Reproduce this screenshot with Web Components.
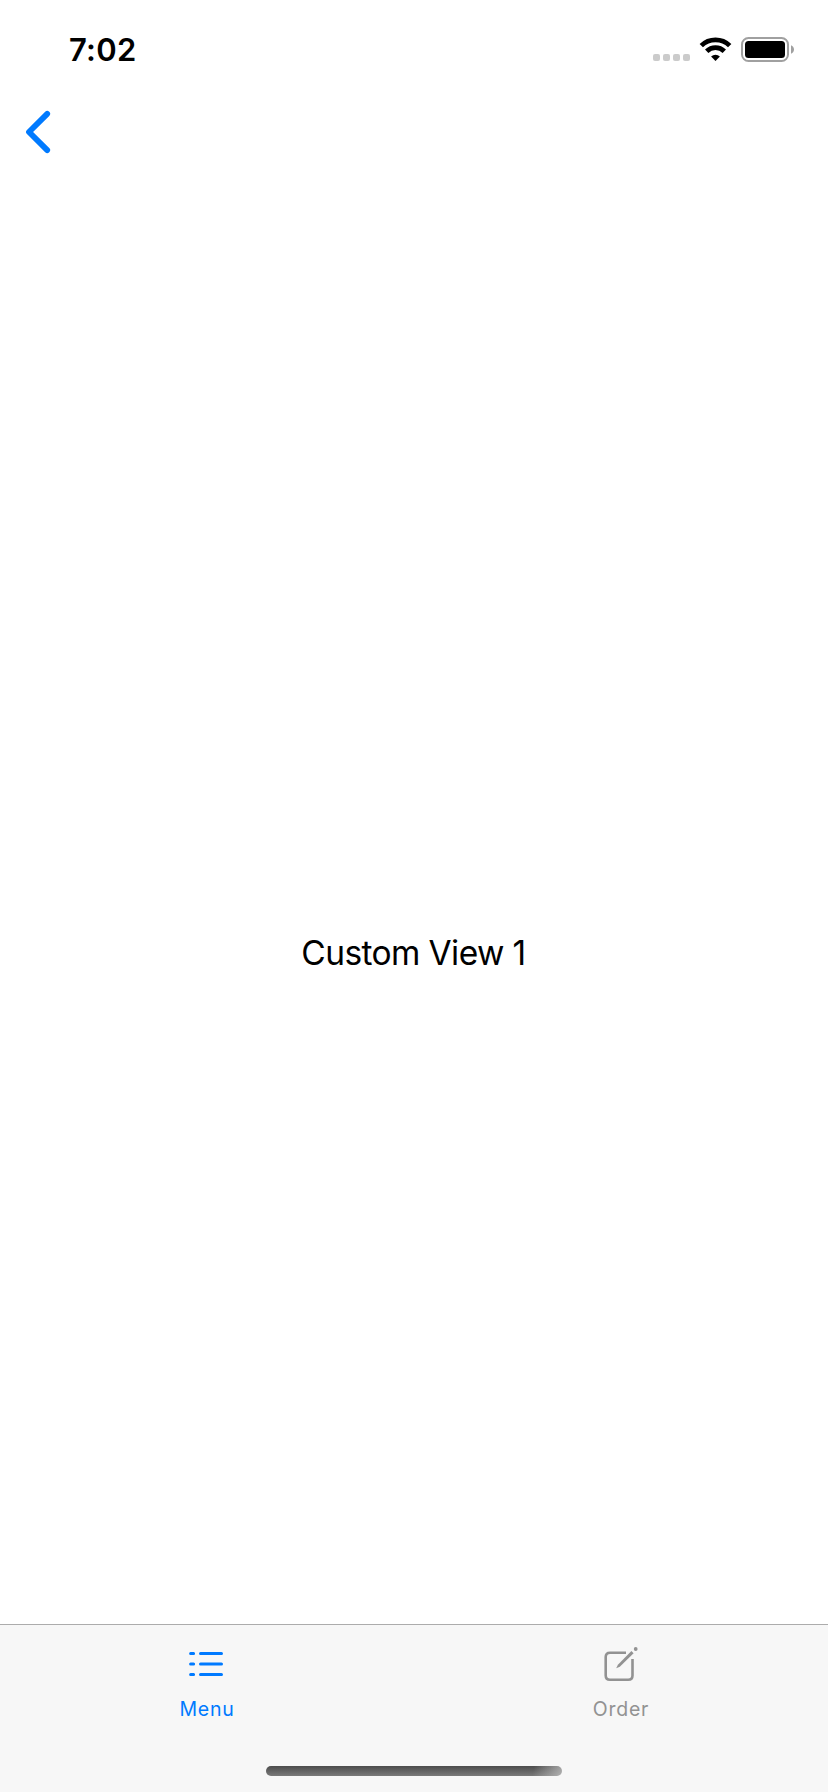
<!DOCTYPE html>
<html lang="en">
<head>
<meta charset="utf-8">
<title>Custom View 1</title>
<style>
html,body{margin:0;height:100%;background:#fff}
body{font-family:Inter,"Liberation Sans",sans-serif;color:#000}
</style>
</head>
<body>
<app-screen></app-screen>
<script>
const define = (name, html) => customElements.define(name, class extends HTMLElement {
  constructor() {
    super();
    const t = document.createElement('template');
    t.innerHTML = html;
    this.attachShadow({mode: 'open'}).append(t.content.cloneNode(true));
  }
});

define('status-bar', `
<style>
:host{display:flex;justify-content:space-between;align-items:flex-start;height:88px;box-sizing:border-box;padding:30px 32px 0 69px}
.time{font-size:31px;line-height:40px;font-weight:600;letter-spacing:.3px}
svg{display:block}
</style>
<span class="time">7:02</span>
<svg width="144" height="40" viewBox="652 30 144 40">
  <g fill="#cbcbcb"><rect x="653" y="54" width="7" height="7" rx="2"/><rect x="663" y="54" width="7" height="7" rx="2"/><rect x="673" y="54" width="7" height="7" rx="2"/><rect x="683" y="54" width="7" height="7" rx="2"/></g>
  <g fill="none" stroke="#000" stroke-width="4.8">
    <path d="M701.3 45.600a20.3 20.3 0 0 1 28.4 0"/>
    <path d="M706.7 51.2a12.6 12.6 0 0 1 17.6 0"/>
  </g>
  <path d="M711.1 56.6a6.4 6.4 0 0 1 8.8 0L715.5 61z"/>
  <rect x="742" y="38" width="46" height="23" rx="6.5" fill="none" stroke="#a0a0a0" stroke-width="2"/>
  <rect x="745" y="41" width="40" height="17" rx="3.5"/>
  <path d="M791 45.3c4 1.5 4 6.900 0 8.400z" fill="#a0a0a0"/>
</svg>`);

define('nav-bar', `
<style>
:host{display:flex;align-items:center;height:88px;padding-left:22px}
svg{display:block}
</style>
<svg width="32" height="48" viewBox="22 108 32 48" fill="none" stroke="#007aff" stroke-width="5.8" stroke-linecap="round" stroke-linejoin="round"><path d="M47.200 113.900L29 132L47.200 150.100"/></svg>`);

define('content-view', `
<style>
:host{display:flex;flex:1;align-items:center;justify-content:center;padding-top:106px;padding-right:1px}
span{font-size:33.5px;line-height:40px;letter-spacing:-.6px;white-space:nowrap}
</style>
<span><slot></slot></span>`);

define('tab-item', `
<style>
:host{display:flex;flex:1;flex-direction:column;align-items:center}
.icon{height:52px;padding-top:16px}
.label{font-size:19.5px;line-height:24px;font-weight:400;letter-spacing:.75px;padding-top:4px}
</style>
<div class="icon"><slot name="icon"></slot></div>
<div class="label"><slot></slot></div>`);

define('home-indicator', `
<style>
:host{display:block;width:296px;height:10px;border-radius:5px;background:linear-gradient(100deg,transparent 90%,rgba(190,190,190,.8) 100%),linear-gradient(#4c4c4c,#797979)}
</style>`);

define('tab-bar', `
<style>
:host{display:flex;flex-direction:column;align-items:center;height:168px;box-sizing:border-box;border-top:1px solid #acacac;background:#f7f7f7}
.items{display:flex;align-self:stretch;height:141px}
</style>
<div class="items"><slot></slot></div>
<home-indicator></home-indicator>`);

define('app-screen', `
<style>
:host{display:flex;flex-direction:column;height:1792px;width:828px}
svg{display:block}
.on{color:#007aff}
.off{color:#929292}
</style>
<status-bar></status-bar>
<nav-bar></nav-bar>
<content-view>Custom View 1</content-view>
<tab-bar><tab-item class="on"><svg slot="icon" width="44" height="44" viewBox="185 1641 44 44" fill="none" stroke="currentColor" stroke-width="3" stroke-linecap="round"><path d="M190.600 1653.600h3M190.600 1664h3M190.600 1674.400h3M200.500 1653.600h21M200.500 1664h21M200.500 1674.400h21"/></svg>Menu</tab-item><tab-item class="off"><svg slot="icon" width="44" height="44" viewBox="598.5 1641 44 44" fill="none" stroke="currentColor" stroke-width="2.600"><path d="M625.500 1652.700H609.500Q605.200 1652.700 605.200 1657V1675.500Q605.200 1679.800 609.500 1679.800H627.700Q632 1679.800 632 1675.500V1659"/><path fill="currentColor" stroke="none" d="M615.700 1668.300L617.400 1664.800L630.900 1651.100L633.100 1653.300L619.300 1666.700Z"/><circle cx="635.200" cy="1649" r="1.900" fill="currentColor" stroke="none"/></svg>Order</tab-item></tab-bar>`);
</script>
</body>
</html></script>
